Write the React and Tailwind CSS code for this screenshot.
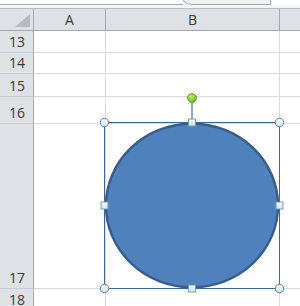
import React from "react";

const rows = [
  { n: "13", h: "h-[22px]" },
  { n: "14", h: "h-[21px]" },
  { n: "15", h: "h-[23px]" },
  { n: "16", h: "h-[27px]" },
  { n: "17", h: "h-[165px]" },
  { n: "18", h: "h-[22px]" },
];

function Overlay() {
  const corners = [
    [104.5, 122.5],
    [279.5, 122.5],
    [104.5, 288.5],
    [279.5, 288.5],
  ];
  const sides = [
    [192, 122.5],
    [104.5, 205.5],
    [279.5, 205.5],
    [192, 288.5],
  ];
  return (
    <svg className="absolute left-0 top-0 pointer-events-none" width="300" height="306" viewBox="0 0 300 306">
      <defs>
        <radialGradient id="g" cx="0.4" cy="0.35" r="0.7">
          <stop offset="0" stopColor="#b8f06a" />
          <stop offset="1" stopColor="#5fb816" />
        </radialGradient>
        <linearGradient id="h" x1="0" y1="0" x2="0" y2="1">
          <stop offset="0" stopColor="#f4fcfe" />
          <stop offset="1" stopColor="#c9e9f2" />
        </linearGradient>
      </defs>
      <line x1="192" y1="102" x2="192" y2="120" stroke="#8ea8c6" strokeWidth="2" />
      <ellipse cx="192" cy="205.5" rx="86" ry="81.8" fill="#4f81bd" stroke="#385d8a" strokeWidth="2.5" />
      <rect x="104.5" y="122.5" width="175" height="166" fill="none" stroke="#3f6792" strokeWidth="1" />
      {sides.map(([x, y], i) => (
        <rect key={i} x={x - 3.5} y={y - 3.5} width="7" height="7" fill="url(#h)" stroke="#7d9bb8" strokeWidth="1" />
      ))}
      {corners.map(([x, y], i) => (
        <circle key={i} cx={x} cy={y} r="4.2" fill="url(#h)" stroke="#6f7f8e" strokeWidth="1" />
      ))}
      <circle cx="192" cy="98" r="4.5" fill="url(#g)" stroke="#5a9a2a" strokeWidth="0.8" />
    </svg>
  );
}

export default function App() {
  return (
    <div className="relative w-[300px] h-[306px] overflow-hidden bg-white font-['Open_Sans','Noto_Sans',sans-serif] text-[#3a3a3a]">
      {/* top strip */}
      <div className="flex h-[5px]">
        <div className="w-[183px] border-b border-[#a7a9ac] bg-white" />
        <div className="w-[88px] border-b border-l border-r border-[#a7a9ac] bg-[#f0f0f0] rounded-bl-[10px_5px]" />
        <div className="flex-1 bg-white" />
      </div>
      <div className="h-[3px] bg-[#f4f5f7]" />
      <div className="h-[1px] bg-[#b9bcc0]" />
      {/* header row */}
      <div className="flex h-[22px] border-b border-[#a5a9ae] bg-[#dee1e6]">
        <div className="relative w-[34px] border-r border-[#a5a9ae]">
          <svg className="absolute left-0 top-0" width="33" height="21">
            <polygon points="15,18 30,18 30,5" fill="#b7bbc1" />
          </svg>
        </div>
        <div className="w-[72px] border-r border-[#a5a9ae] flex items-center justify-center text-[14px] leading-[19px]">A</div>
        <div className="w-[174px] border-r border-[#a5a9ae] flex items-center justify-center text-[14px] leading-[19px]">B</div>
        <div className="flex-1" />
      </div>
      {rows.map((r) => (
        <div key={r.n} className={`flex ${r.h}`}>
          <div className="w-[34px] border-r border-b border-r-[#a5a9ae] border-b-[#c9ccd0] bg-[#dee1e6] flex items-end justify-center pl-[1px] pb-[1px] text-[14px] leading-[19px]">
            {r.n}
          </div>
          <div className="w-[72px] border-r border-b border-[#d9dadb]" />
          <div className="w-[174px] border-r border-b border-[#d9dadb]" />
          <div className="flex-1 border-b border-[#d9dadb]" />
        </div>
      ))}
      <Overlay />
    </div>
  );
}
